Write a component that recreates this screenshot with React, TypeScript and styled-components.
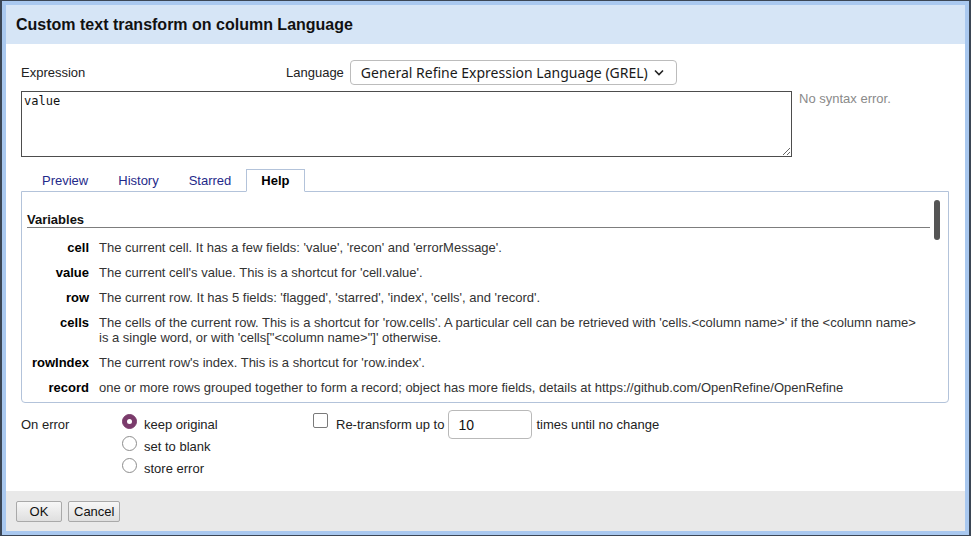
import styled, { createGlobalStyle } from 'styled-components';

const GlobalStyle = createGlobalStyle`
  html, body {
    margin: 0;
    padding: 0;
  }
  body {
    background: #3b4655;
    font-family: "Liberation Sans", Arial, sans-serif;
    font-size: 13px;
    color: #222;
    overflow: hidden;
  }
`;

type Variable = {
  name: string;
  text: string;
};

const variables: Variable[] = [
  { name: 'cell', text: "The current cell. It has a few fields: 'value', 'recon' and 'errorMessage'." },
  { name: 'value', text: "The current cell's value. This is a shortcut for 'cell.value'." },
  { name: 'row', text: "The current row. It has 5 fields: 'flagged', 'starred', 'index', 'cells', and 'record'." },
  {
    name: 'cells',
    text: "The cells of the current row. This is a shortcut for 'row.cells'. A particular cell can be retrieved with 'cells.<column name>' if the <column name> is a single word, or with 'cells[\"<column name>\"]' otherwise.",
  },
  { name: 'rowIndex', text: "The current row's index. This is a shortcut for 'row.index'." },
  {
    name: 'record',
    text: 'one or more rows grouped together to form a record; object has more fields, details at https://github.com/OpenRefine/OpenRefine',
  },
];

const tabs = ['Preview', 'History', 'Starred', 'Help'];
const activeTab = 'Help';

export default function App() {
  return (
    <>
      <GlobalStyle />
      <Frame>
        <Header>Custom text transform on column Language</Header>

        <Body>
          <ExprRow>
            <ExprLabel>Expression</ExprLabel>
            <LangLabel>Language</LangLabel>
            <Select>
              <span>General Refine Expression Language (GREL)</span>
              <svg width="10" height="7" viewBox="0 0 10 7">
                <polyline points="1,1.5 5,5.5 9,1.5" fill="none" stroke="#222" strokeWidth="1.6" />
              </svg>
            </Select>
          </ExprRow>

          <EditorRow>
            <Editor defaultValue="value" spellCheck={false} />
            <Status>No syntax error.</Status>
          </EditorRow>

          <TabList>
            {tabs.map((t) => (
              <Tab key={t} $active={t === activeTab}>
                {t}
              </Tab>
            ))}
          </TabList>

          <Panel>
            <HelpHeading>Variables</HelpHeading>
            <VarGrid>
              {variables.map((v) => (
                <VarRow key={v.name}>
                  <VarName>{v.name}</VarName>
                  <VarText>{v.text}</VarText>
                </VarRow>
              ))}
            </VarGrid>
            <ScrollThumb />
          </Panel>

          <OptionsRow>
            <OnErrorLabel>On error</OnErrorLabel>
            <RadioGroup>
              <RadioRow>
                <Radio $checked />
                <span>keep original</span>
              </RadioRow>
              <RadioRow>
                <Radio />
                <span>set to blank</span>
              </RadioRow>
              <RadioRow>
                <Radio />
                <span>store error</span>
              </RadioRow>
            </RadioGroup>
            <RepeatGroup>
              <Checkbox />
              <span>Re-transform up to</span>
              <CountInput>10</CountInput>
              <span>times until no change</span>
            </RepeatGroup>
          </OptionsRow>
        </Body>

        <Footer>
          <Button>OK</Button>
          <Button>Cancel</Button>
        </Footer>
      </Frame>
    </>
  );
}

const Frame = styled.div`
  margin: 1px 2px 0 2px;
  width: 967px;
  height: 534px;
  box-sizing: border-box;
  border: 4px solid #a9c8ef;
  background: #fff;
  display: flex;
  flex-direction: column;
`;

const Header = styled.div`
  height: 39px;
  flex: none;
  display: flex;
  align-items: center;
  padding: 0 10px;
  background: #d6e5f6;
  font-size: 16px;
  font-weight: bold;
  color: #111;
`;

const Body = styled.div`
  flex: 1;
  padding: 15px 15px 0 15px;
  display: flex;
  flex-direction: column;
`;

const ExprRow = styled.div`
  display: flex;
  align-items: center;
  height: 25px;
  padding-top: 1px;
`;

const ExprLabel = styled.div`
  width: 265px;
`;

const LangLabel = styled.div`
  margin-right: 6px;
`;

const Select = styled.div`
  width: 327px;
  height: 25px;
  box-sizing: border-box;
  margin-top: -1px;
  border: 1px solid #bcbcbc;
  border-radius: 4px;
  padding: 0 10px;
  display: flex;
  align-items: center;
  gap: 6px;
  font-family: "Noto Sans", "Liberation Sans", sans-serif;
  font-size: 14px;
  color: #1a1a1a;
`;

const EditorRow = styled.div`
  display: flex;
  margin-top: 6px;
`;

const Editor = styled.textarea`
  width: 771px;
  height: 66px;
  box-sizing: border-box;
  margin: 0;
  border: 1px solid #4d4d4d;
  padding: 2px 2px;
  font-family: "DejaVu Sans Mono", monospace;
  font-size: 12px;
  line-height: 15px;
  color: #111;
  resize: both;
  outline: none;
`;

const Status = styled.div`
  margin-left: 7px;
  line-height: 15px;
  color: #8a8a8a;
`;

const TabList = styled.div`
  display: flex;
  margin-top: 12px;
  padding-left: 6px;
  position: relative;
  z-index: 1;
`;

const Tab = styled.div<{ $active?: boolean }>`
  height: 23px;
  box-sizing: border-box;
  padding: 0 14px;
  line-height: 21px;
  border: 1px solid ${(p) => (p.$active ? '#b3c3da' : 'transparent')};
  border-bottom-color: ${(p) => (p.$active ? '#fff' : 'transparent')};
  background: ${(p) => (p.$active ? '#fff' : 'transparent')};
  color: ${(p) => (p.$active ? '#000' : '#1f2a8a')};
  font-weight: ${(p) => (p.$active ? 'bold' : 'normal')};
`;

const Panel = styled.div`
  position: relative;
  margin-top: -1px;
  width: 928px;
  height: 212px;
  box-sizing: border-box;
  border: 1px solid #b3c3da;
  border-radius: 0 0 4px 4px;
  padding: 0 18px 0 5px;
  overflow: hidden;
`;

const HelpHeading = styled.div`
  margin-top: 20px;
  line-height: 15px;
  font-weight: bold;
  color: #111;
  border-bottom: 1px solid #7d7d7d;
`;

const VarGrid = styled.div`
  margin-top: 7px;
  padding-right: 6px;
  display: flex;
  flex-direction: column;
`;

const VarRow = styled.div`
  display: grid;
  grid-template-columns: 62px 1fr;
  column-gap: 10px;
  padding: 5px 0;
  line-height: 15px;
`;

const VarName = styled.div`
  text-align: right;
  font-weight: bold;
  color: #000;
`;

const VarText = styled.div`
  color: #333;
`;

const ScrollThumb = styled.div`
  position: absolute;
  top: 8px;
  right: 8px;
  width: 6px;
  height: 40px;
  border-radius: 3px;
  background: #555;
`;

const OptionsRow = styled.div`
  display: flex;
  align-items: flex-start;
  margin-top: 7px;
`;

const OnErrorLabel = styled.div`
  width: 101px;
  padding-top: 7px;
  line-height: 15px;
`;

const RadioGroup = styled.div`
  width: 191px;
  display: flex;
  flex-direction: column;
`;

const RadioRow = styled.div`
  height: 22px;
  display: flex;
  align-items: center;
  gap: 7px;

  span {
    padding-top: 6px;
  }
`;

const Radio = styled.span<{ $checked?: boolean }>`
  width: 15px;
  height: 15px;
  box-sizing: border-box;
  border-radius: 50%;
  border: 1px solid ${(p) => (p.$checked ? '#7a3b6b' : '#8d8d8d')};
  background: ${(p) => (p.$checked ? '#7a3b6b' : '#fff')};
  display: flex;
  align-items: center;
  justify-content: center;
  padding: 0 !important;

  &::after {
    content: '';
    width: 5px;
    height: 5px;
    border-radius: 50%;
    background: ${(p) => (p.$checked ? '#fff' : 'transparent')};
  }
`;

const RepeatGroup = styled.div`
  height: 29px;
  display: flex;
  align-items: center;
`;

const Checkbox = styled.span`
  width: 15px;
  height: 15px;
  box-sizing: border-box;
  border: 1px solid #7a7a7a;
  border-radius: 2px;
  background: #fff;
  align-self: flex-start;
  margin-top: 3px;
  margin-right: 8px;
`;

const CountInput = styled.div`
  width: 84px;
  height: 29px;
  box-sizing: border-box;
  margin: 0 4px 0 4px;
  border: 1px solid #b9b9b9;
  border-radius: 4px;
  padding: 1px 0 0 9px;
  display: flex;
  align-items: center;
  font-size: 14px;
  color: #111;
`;

const Footer = styled.div`
  height: 40px;
  flex: none;
  box-sizing: border-box;
  background: #e9e9e9;
  padding: 10px;
  display: flex;
  gap: 6px;
`;

const Button = styled.div`
  height: 21px;
  min-width: 46px;
  box-sizing: border-box;
  padding: 0 5px;
  border: 1px solid #a9a9a9;
  border-radius: 2px;
  background: linear-gradient(#f7f7f7, #dfdfdf);
  display: flex;
  align-items: center;
  justify-content: center;
  color: #111;
`;
